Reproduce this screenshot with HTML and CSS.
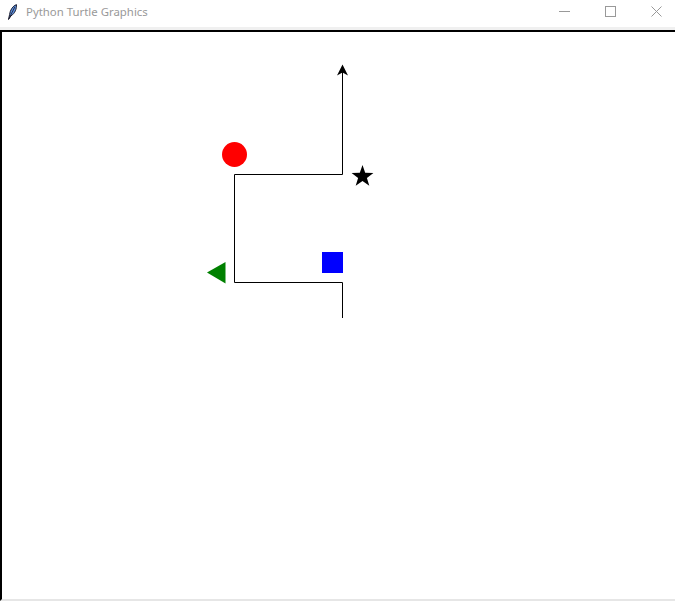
FILE: index.html
```html
<!DOCTYPE html>
<html>
<head>
<meta charset="utf-8">
<link rel="stylesheet" href="styles.css">
</head>
<body>
<div class="window">
  <div class="titlebar">
    <div class="title-left">
      <svg class="app-icon" width="10" height="16" viewBox="0 0 10 16">
        <path d="M1.5 15.5 L2.6 10.5 C3 6.5 5.5 2 9.4 0.6 C9.8 4.5 8 9.5 4 11.8 Z" fill="#5b8fe0" stroke="#1a1a2a" stroke-width="1"/>
        <path d="M2 14.5 L7.8 3" stroke="#1a1a2a" stroke-width="0.8"/>
      </svg>
      <span class="title">Python Turtle Graphics</span>
    </div>
    <div class="controls">
      <svg width="11" height="11" viewBox="0 0 11 11"><path d="M0 5.5 H11" stroke="#999" stroke-width="1"/></svg>
      <svg width="11" height="11" viewBox="0 0 11 11"><rect x="0.5" y="0.5" width="10" height="10" fill="none" stroke="#999" stroke-width="1"/></svg>
      <svg width="11" height="11" viewBox="0 0 11 11"><path d="M0.5 0.5 L10.5 10.5 M10.5 0.5 L0.5 10.5" stroke="#999" stroke-width="1"/></svg>
    </div>
  </div>
  <div class="band"></div>
  <div class="canvas">
    <svg class="drawing" width="673" height="567" viewBox="2 32 673 567">
      <polyline points="342.5,318 342.5,282.5 234.5,282.5 234.5,174.5 342.5,174.5 342.5,70" fill="none" stroke="#000" stroke-width="1"/>
      <polygon points="342.5,64.5 337,75.5 342.5,72.5 348,75.5" fill="#000"/>
      <circle cx="234.5" cy="154.5" r="12.5" fill="#ff0000"/>
      <rect x="322" y="252" width="21" height="21" fill="#0000ff"/>
      <polygon points="207,272.5 225.5,262 225.5,283.5" fill="#008000"/>
      <polygon points="362.5,165 365.2,172.8 373.4,172.9 366.9,177.9 369.3,185.8 362.5,181.1 355.7,185.8 358.1,177.9 351.6,172.9 359.8,172.8" fill="#000"/>
    </svg>
  </div>
</div>
</body>
</html>
```

FILE: styles.css
```css
html, body {
  margin: 0;
  padding: 0;
  background: #ffffff;
}

.window {
  width: 675px;
  height: 601px;
  display: flex;
  flex-direction: column;
  overflow: hidden;
}

.titlebar {
  height: 27px;
  flex: none;
  display: flex;
  align-items: center;
  justify-content: space-between;
  background: #ffffff;
}

.title-left {
  display: flex;
  align-items: center;
  padding-left: 7px;
  gap: 9px;
  margin-top: -3px;
}

.app-icon {
  display: block;
}

.title {
  font-family: "Noto Sans", "Open Sans", sans-serif;
  font-size: 11.4px;
  color: #999999;
  line-height: 16px;
}

.controls {
  display: flex;
  align-items: center;
  gap: 35px;
  padding-right: 13px;
  margin-top: -5px;
}

.controls svg {
  display: block;
}

.band {
  height: 3px;
  flex: none;
  background: #f0f0f0;
}

.canvas {
  flex: none;
  height: 567px;
  border-top: 2px solid #000000;
  border-left: 2px solid #000000;
  border-bottom: 2px solid #e6e6e6;
  background: #ffffff;
}

.drawing {
  display: block;
}
```
